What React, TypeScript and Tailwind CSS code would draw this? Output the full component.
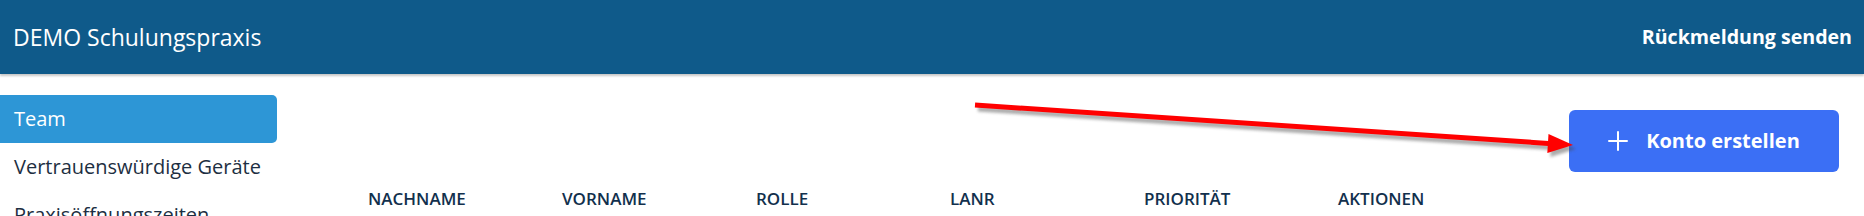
import React from "react";

const columns = ["NACHNAME", "VORNAME", "ROLLE", "LANR", "PRIORITÄT", "AKTIONEN"];

const navItems = [
  { label: "Team", active: true },
  { label: "Vertrauenswürdige Geräte", active: false },
  { label: "Praxisöffnungszeiten", active: false },
];

function PlusIcon() {
  return (
    <svg width="20" height="20" viewBox="0 0 20 20" fill="none">
      <path d="M10 1v18M1 10h18" stroke="white" strokeWidth="2" strokeLinecap="round" />
    </svg>
  );
}

// Red annotation arrow drawn over the page
function AnnotationArrow() {
  return (
    <svg
      className="pointer-events-none absolute left-0 top-0"
      width="1864"
      height="216"
      viewBox="0 0 1864 216"
    >
      <defs>
        <filter id="arrowShadow" x="-10%" y="-50%" width="120%" height="200%">
          <feGaussianBlur stdDeviation="1.5" />
        </filter>
      </defs>
      <g transform="translate(3 4)" opacity="0.45" filter="url(#arrowShadow)">
        <line x1="975" y1="105" x2="1552" y2="143.7" stroke="#444" strokeWidth="5" />
        <polygon points="1573,145 1548.5,134 1547.3,153" fill="#444" />
      </g>
      <line x1="975" y1="105" x2="1552" y2="143.7" stroke="#ff0000" strokeWidth="5" />
      <polygon points="1573,145 1548.5,134 1547.3,153" fill="#ff0000" />
    </svg>
  );
}

export default function App() {
  return (
    <div
      className="relative h-[216px] w-full overflow-hidden bg-white"
      style={{ fontFamily: '"Open Sans", "Noto Sans", sans-serif' }}
    >
      {/* Header */}
      <header className="relative z-10 flex h-[74px] items-center justify-between bg-[#0f5a8a] pl-[13px] pr-[12px] shadow-[0_2px_2px_rgba(0,0,0,0.22)]">
        <div className="text-[23px] text-white">DEMO Schulungspraxis</div>
        <div className="text-[19.6px] font-bold text-white">Rückmeldung senden</div>
      </header>

      <div className="flex">
        {/* Sidebar */}
        <nav className="w-[277px] shrink-0 pt-[21px]">
          {navItems.map((item) => (
            <div
              key={item.label}
              className={
                item.active
                  ? "flex h-12 items-center rounded-r-[5px] bg-[#2d96d6] pl-[14px] text-[20px] text-white"
                  : "flex h-12 items-center pl-[14px] text-[20px] text-[#1d2f42]"
              }
            >
              {item.label}
            </div>
          ))}
        </nav>

        {/* Main */}
        <main className="flex-1 pr-[25px] pt-[36px]">
          <div className="flex justify-end">
            <button
              type="button"
              className="flex h-[62px] w-[270px] items-center justify-center gap-[18px] rounded-[6px] bg-[#3b6ff5] text-[20px] font-bold text-white"
            >
              <PlusIcon />
              <span>Konto erstellen</span>
            </button>
          </div>

          <div className="ml-[91px] mt-[15px] grid grid-cols-[repeat(6,194px)]">
            {columns.map((c) => (
              <div key={c} className="text-[17px] font-semibold leading-6 text-[#12304d]">
                {c}
              </div>
            ))}
          </div>
        </main>
      </div>

      <AnnotationArrow />
    </div>
  );
}
